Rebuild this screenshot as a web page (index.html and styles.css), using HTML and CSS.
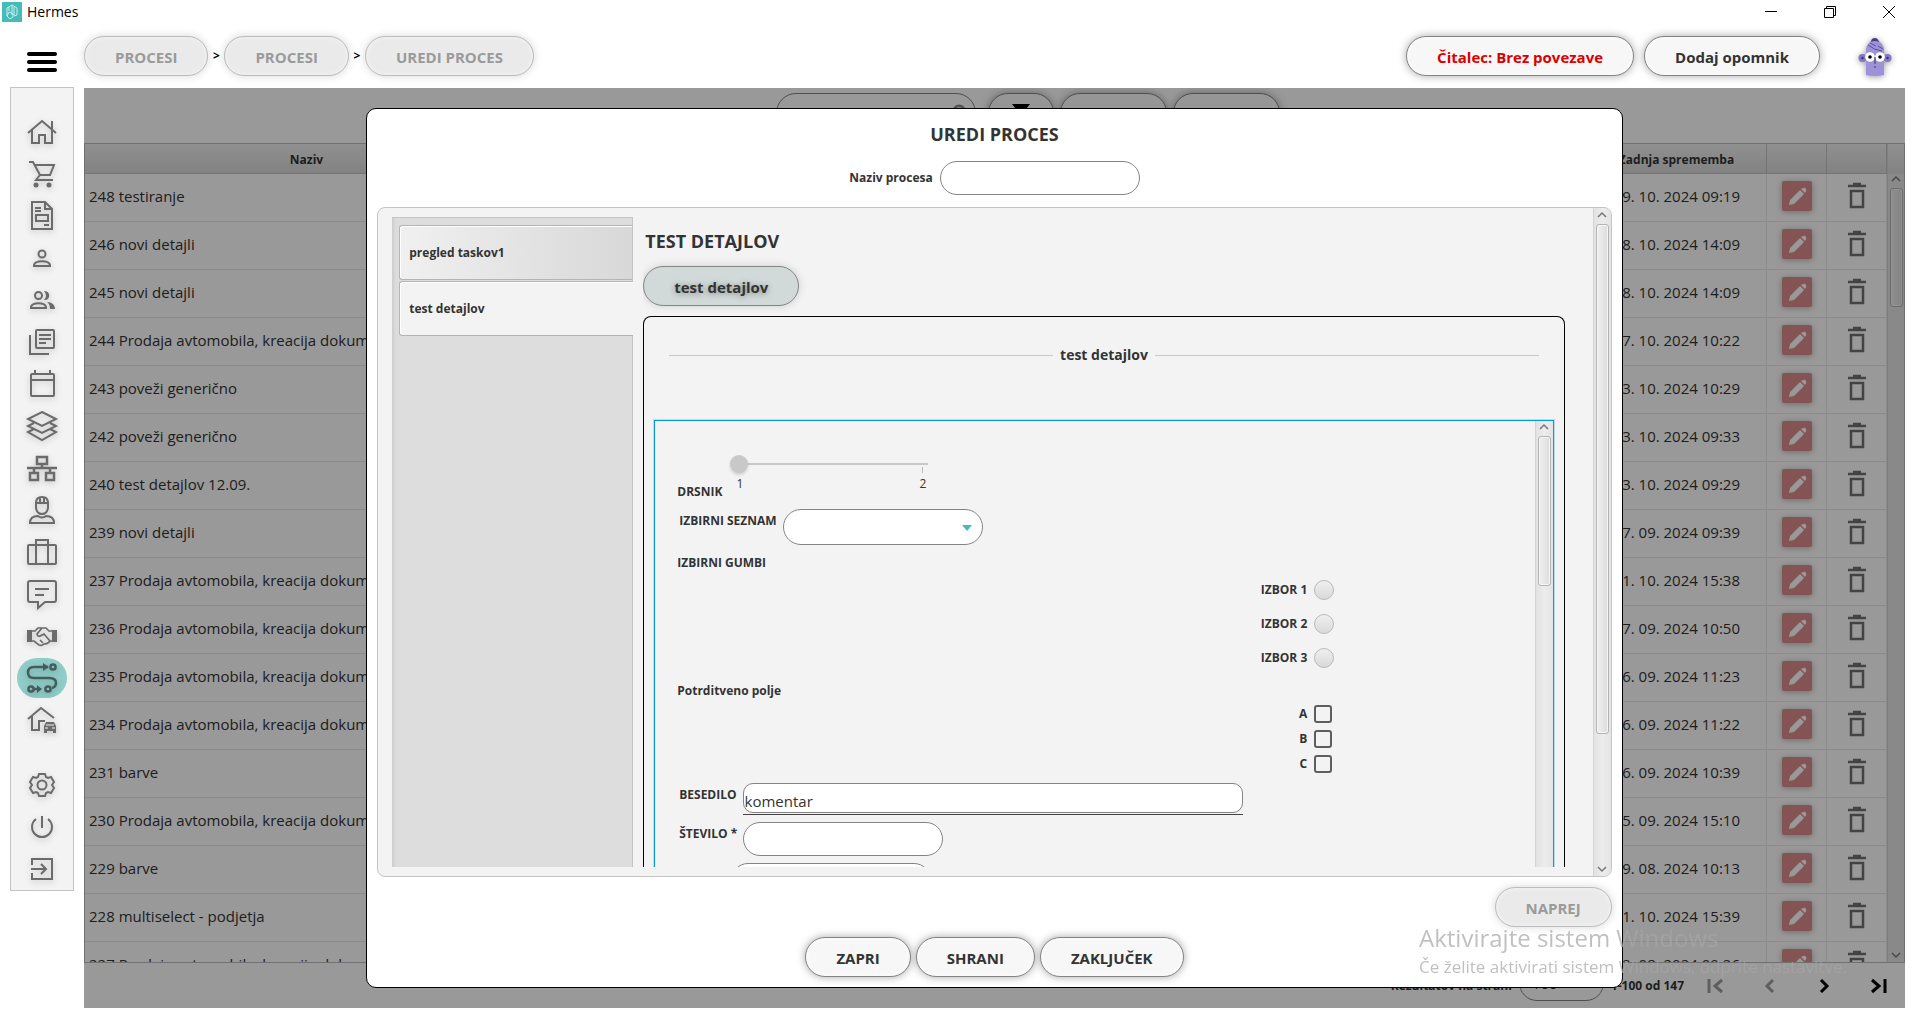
FILE: index.html
```html
<!DOCTYPE html>
<html lang="sl">
<head>
<meta charset="utf-8">
<title>Hermes</title>
<link rel="stylesheet" href="styles.css">
</head>
<body>
<div class="titlebar">
  <svg class="app-logo" viewBox="0 0 20 20"><rect width="20" height="20" fill="#46bcb8"/><path d="M10 3v10M5 6l5-3 5 3v7l-3 1M5 6v8l3 3 3-2v-3l-4-2-2 4M7 5v4M12 5v8" fill="none" stroke="#c9f0ee" stroke-width="1"/></svg>
  <span class="app-name">Hermes</span>
  <div class="window-controls">
    <button aria-label="Minimiraj"><svg viewBox="0 0 14 14"><path d="M1 6.500h12"/></svg></button>
    <button aria-label="Obnovi"><svg viewBox="0 0 14 14"><path d="M1.500 3.500h9v9h-9zM3.500 3.500v-2h9v9h-2"/></svg></button>
    <button aria-label="Zapri okno"><svg viewBox="0 0 14 14"><path d="M1 1l12 12M13 1L1 13"/></svg></button>
  </div>
</div>

<header class="topbar">
  <button class="menu-toggle" aria-label="Meni"><span></span><span></span><span></span></button>
  <nav class="crumbs">
    <button class="pill pill-muted" disabled>PROCESI</button>
    <span>&gt;</span>
    <button class="pill pill-muted" disabled>PROCESI</button>
    <span>&gt;</span>
    <button class="pill pill-muted" disabled>UREDI PROCES</button>
  </nav>
  <div class="top-actions">
    <button class="pill pill-alert">Čitalec: Brez povezave</button>
    <button class="pill">Dodaj opomnik</button>
    <svg class="avatar" viewBox="0 0 34 40">
      <path d="M8 38V12Q9 5 17 3q8 2 9 9v26q-9 2-18 0z" fill="#9d92d8"/>
      <path d="M13 5q0-4 4-4 3 0 4 4-4-2-8 0z" fill="#4a3f85"/>
      <path d="M10 8q6 5 14 6M12 6l6 3M20 9l5 3" fill="none" stroke="#5a4e99"/>
      <circle cx="4.500" cy="21" r="4" fill="#8478c4"/><circle cx="29.500" cy="21" r="4" fill="#8478c4"/>
      <circle cx="4.500" cy="21" r="1.200" fill="#3c3468"/><circle cx="29.500" cy="21" r="1.200" fill="#3c3468"/>
      <circle cx="12" cy="20" r="4.800" fill="#fff"/><circle cx="22" cy="20" r="4.800" fill="#fff"/>
      <circle cx="12" cy="20" r="1.800"/><circle cx="22" cy="20" r="1.800"/>
      <path d="M17 20v7M16 30h2" fill="none" stroke="#3c3468"/>
    </svg>
  </div>
</header>

<div class="workspace">
  <nav class="sidebar">
    <a href="#" aria-label="Domov"><svg viewBox="0 0 30 30"><path d="M1 16L15 4l14 12M5 13v13h7v-8h6v8h7V13M25 12V4"/></svg></a>
    <a href="#" aria-label="Prodaja"><svg viewBox="0 0 30 30"><path d="M2 3h4l7 13h10l4-10H8M13 16l-4 5h17"/><circle cx="9" cy="26" r="2.500" class="solid"/><circle cx="22" cy="26" r="2.500" class="solid"/></svg></a>
    <a href="#" aria-label="Dokument"><svg viewBox="0 0 30 30"><path d="M5 1h13l7 7v20H5z"/><path d="M18 1v7h7M8 7h6M8 10h6M17 24h5M9 14h12v6H9z"/></svg></a>
    <a href="#" aria-label="Oseba"><svg viewBox="0 0 30 30"><circle cx="15" cy="11" r="3.500"/><path d="M7 23v-1c1-5 15-5 16 0v1z"/></svg></a>
    <a href="#" aria-label="Osebe"><svg viewBox="0 0 30 30"><circle cx="11.500" cy="10.500" r="3.500"/><path d="M4 23v-1c1-5 14-5 15 0v1z"/><path class="solid" d="M17 6c7-1 7 10 0 9q4-4.500 0-9zM20 17c5 0 8 3 8 7h-5q0-5-3-7z"/></svg></a>
    <a href="#" aria-label="Arhiv"><svg viewBox="0 0 30 30"><rect x="9" y="3" width="18" height="18" rx="1"/><path d="M3 8v19h19M12 8h12M12 12h12M12 16h7"/></svg></a>
    <a href="#" aria-label="Koledar"><svg viewBox="0 0 30 30"><rect x="4" y="5" width="23" height="22" rx="1"/><path d="M4 11h23M8 1v4M23 1v4"/></svg></a>
    <a href="#" aria-label="Plasti"><svg viewBox="0 0 30 30"><path d="M15 1l14 7-14 7L1 8zM7 12l-6 3 14 7 14-7-6-3M7 18l-6 3 14 8 14-8-6-3"/></svg></a>
    <a href="#" aria-label="Organizacija"><svg viewBox="0 0 30 30"><path stroke-width="2.500" d="M10 4h10v7H10zM3 20h8v7H3zM19 20h8v7h-8zM0 15h30M15 11v4M7 15v5M23 15v5"/></svg></a>
    <a href="#" aria-label="Delavec"><svg viewBox="0 0 30 30"><path d="M8 8h14M9 8q0-6 6-6t6 6v5q-1 6-6 6t-6-6zM13 2v6M17 2v6M3 28q0-7 8-7 4 3 8 0 8 0 8 7z"/></svg></a>
    <a href="#" aria-label="Kovček"><svg viewBox="0 0 30 30"><rect x="1" y="8" width="28" height="19" rx="1"/><path d="M9 27V3h12v24"/></svg></a>
    <a href="#" aria-label="Sporočila"><svg viewBox="0 0 30 30"><path d="M3 2h24q2 0 2 2v17q0 2-2 2h-9l-7 6v-6H3q-2 0-2-2V4q0-2 2-2zM8 10h14M8 16h9"/></svg></a>
    <a href="#" aria-label="Pogodbe"><svg viewBox="0 0 30 30"><path class="solid" d="M0 9h5v12H0zM25 9h5v12h-5z"/><path stroke-width="1.700" d="M5 10h3l3-3h4M5 20h2l5 4q3 1 5-1 4 0 6-3h2M25 10h-3l-3-3h-4l-5 6q1 4 5 1l2-1 6 7M13 19l3 3"/></svg></a>
    <a href="#" aria-label="Procesi" class="active"><svg viewBox="0 0 30 30"><g stroke-width="2.500"><path d="M21 4H7q-6 0-6 5.500T7 15h15q7 0 7 5 0 4-4 5M7 26h4"/><circle cx="26" cy="4" r="2.600"/><circle cx="4" cy="26" r="2.600"/><circle cx="21" cy="26" r="2.600"/></g><path class="solid" d="M16 0l6 4-6 4zM10 22l5 4-5 4z"/></svg></a>
    <a href="#" aria-label="Nepremičnine"><svg viewBox="0 0 30 30"><path d="M1 14L14 3l13 10M5 11v14h7M12 26v-10h6"/><path class="solid" d="M19 17h8l2 4v7h-3v-2h-6v2h-3v-7z"/><path stroke="#f3f3f3" stroke-width="1" d="M19 20h8M18 23h3M25 23h3"/></svg></a>
    <a href="#" aria-label="Nastavitve" class="split"><svg viewBox="0 0 30 30"><path d="M12 4h6l1 3 2 1 3-1 3 5-2 3 2 3-3 5-3-1-2 1-1 3h-6l-1-3-2-1-3 1-3-5 2-3-2-3 3-5 3 1 2-1z"/><circle cx="15" cy="15" r="4.500"/></svg></a>
    <a href="#" aria-label="Izklop"><svg viewBox="0 0 30 30"><path d="M15 4v12M9 7a10 10 0 1 0 12 0"/></svg></a>
    <a href="#" aria-label="Odjava"><svg viewBox="0 0 30 30"><path d="M5 11V5h20v20H5v-6M4 15h14M14 10l5 5-5 5"/></svg></a>
  </nav>

  <main class="main">
    <div class="toolbar">
      <div class="search"><input type="search" aria-label="Iskanje"><svg viewBox="0 0 20 20"><circle cx="8" cy="8" r="6"/><path d="M12 12l6 6"/></svg></div>
      <button class="tool tool-filter" aria-label="Filter"><svg viewBox="0 0 20 20"><path d="M0 0h20l-8 10v8H8v-8z"/></svg></button>
      <button class="tool" aria-label="Dodaj"></button>
      <button class="tool" aria-label="Izvozi"></button>
    </div>

    <div class="grid">
      <table>
        <colgroup><col class="c-name"><col><col class="c-date"><col class="c-act"><col class="c-act"></colgroup>
        <thead><tr><th>Naziv</th><th></th><th>Zadnja sprememba</th><th></th><th></th></tr></thead>
        <tbody id="rows"></tbody>
      </table>
      <div class="scroll scroll-grid"><svg viewBox="0 0 10 8"><path d="M1 6l4-4 4 4"/></svg><i></i><svg viewBox="0 0 10 8"><path d="M1 2l4 4 4-4"/></svg></div>
    </div>

    <div class="pager">
      <label for="page-size">Rezultatov na strani</label>
      <select id="page-size"><option>100</option></select>
      <span>1-100 od 147</span>
      <div class="pager-nav">
        <button disabled aria-label="Prva stran"><svg viewBox="0 0 18 16"><path d="M2 1v14M15 2L8 8l7 6"/></svg></button>
        <button disabled aria-label="Prejšnja stran"><svg viewBox="0 0 18 16"><path d="M12 2L6 8l6 6"/></svg></button>
        <button aria-label="Naslednja stran"><svg viewBox="0 0 18 16"><path d="M6 2l6 6-6 6"/></svg></button>
        <button aria-label="Zadnja stran"><svg viewBox="0 0 18 16"><path d="M16 1v14M3 2l7 6-7 6"/></svg></button>
      </div>
    </div>

    <div class="overlay">
      <section class="modal" role="dialog" aria-labelledby="modal-title">
        <h1 id="modal-title">UREDI PROCES</h1>
        <div class="name-row"><label for="proc-name">Naziv procesa</label><input class="field" id="proc-name" type="text"></div>

        <div class="panel">
          <div class="tabs">
            <button>pregled taskov1</button>
            <button class="selected">test detajlov</button>
          </div>
          <div class="pane">
            <h2>TEST DETAJLOV</h2>
            <button class="pill pill-step">test detajlov</button>
            <div class="box">
              <div class="legend"><span>test detajlov</span></div>
              <div class="form-frame">
                <form class="form">
                  <div class="row-slider">
                    <label for="drsnik">DRSNIK</label>
                    <div class="slider">
                      <input id="drsnik" type="range" min="1" max="2" value="1">
                      <div class="ticks"><span>1</span><span>2</span></div>
                    </div>
                  </div>
                  <div class="row row-list"><label for="seznam">IZBIRNI SEZNAM</label>
                    <div class="select"><select id="seznam"><option></option></select></div></div>
                  <fieldset class="radios">
                    <legend>IZBIRNI GUMBI</legend>
                    <label>IZBOR 1<input type="radio" name="izbor"></label>
                    <label>IZBOR 2<input type="radio" name="izbor"></label>
                    <label>IZBOR 3<input type="radio" name="izbor"></label>
                  </fieldset>
                  <fieldset class="checks">
                    <legend>Potrditveno polje</legend>
                    <label>A<input type="checkbox"></label>
                    <label>B<input type="checkbox"></label>
                    <label>C<input type="checkbox"></label>
                  </fieldset>
                  <div class="row"><label for="besedilo">BESEDILO</label><div class="underlined"><input class="text" id="besedilo" type="text" value="komentar"></div></div>
                  <div class="row"><label for="stevilo">ŠTEVILO *</label><input class="field" id="stevilo" type="text"></div>
                  <div class="row row-next"><input class="field" type="text" aria-label="Datum"></div>
                </form>
                <div class="scroll scroll-form"><svg viewBox="0 0 10 8"><path d="M1 6l4-4 4 4"/></svg><i></i></div>
              </div>
            </div>
          </div>
          <div class="scroll scroll-panel"><svg viewBox="0 0 10 8"><path d="M1 6l4-4 4 4"/></svg><i></i><svg viewBox="0 0 10 8"><path d="M1 2l4 4 4-4"/></svg></div>
        </div>

        <div class="next"><button class="pill pill-muted" disabled>NAPREJ</button></div>
        <div class="actions">
          <button class="pill">ZAPRI</button>
          <button class="pill">SHRANI</button>
          <button class="pill">ZAKLJUČEK</button>
        </div>
      </section>
    </div>
  </main>
</div>

<div class="activation">
  <p>Aktivirajte sistem Windows</p>
  <p class="small">Če želite aktivirati sistem Windows, odprite nastavitve.</p>
</div>
<script src="rows.js"></script>
</body>
</html>
```
FILE: rows.js
```js
const rows = [
  ["248 testiranje", "19. 10. 2024 09:19"],
  ["246 novi detajli", "18. 10. 2024 14:09"],
  ["245 novi detajli", "18. 10. 2024 14:09"],
  ["244 Prodaja avtomobila, kreacija dokumentov", "17. 10. 2024 10:22"],
  ["243 poveži generično", "23. 10. 2024 10:29"],
  ["242 poveži generično", "23. 10. 2024 09:33"],
  ["240 test detajlov 12.09.", "23. 10. 2024 09:29"],
  ["239 novi detajli", "17. 09. 2024 09:39"],
  ["237 Prodaja avtomobila, kreacija dokumentov", "11. 10. 2024 15:38"],
  ["236 Prodaja avtomobila, kreacija dokumentov", "17. 09. 2024 10:50"],
  ["235 Prodaja avtomobila, kreacija dokumentov", "16. 09. 2024 11:23"],
  ["234 Prodaja avtomobila, kreacija dokumentov", "16. 09. 2024 11:22"],
  ["231 barve", "16. 09. 2024 10:39"],
  ["230 Prodaja avtomobila, kreacija dokumentov", "05. 09. 2024 15:10"],
  ["229 barve", "29. 08. 2024 10:13"],
  ["228 multiselect - podjetja", "11. 10. 2024 15:39"],
  ["227 Prodaja avtomobila, kreacija dokumentov", "22. 08. 2024 09:26"]
];
const edit = '<button class="edit" aria-label="Uredi"><svg viewBox="0 0 30 30"><path d="M7 24l1-5L18 9l4 4-10 10zM19 8l2-1q2-1 3 1t-1 4z"/></svg></button>';
const trash = '<button class="trash" aria-label="Izbriši"><svg viewBox="0 0 20 28"><path d="M1 4h18M6 2h8M4 9h12v16H4z"/></svg></button>';
document.getElementById("rows").innerHTML = rows.map(([name, date]) =>
  `<tr><td>${name}</td><td></td><td class="date">${date}</td><td class="act">${edit}</td><td class="act">${trash}</td></tr>`).join("");
```
FILE: styles.css
```css
* { box-sizing: border-box; }

body {
  margin: 0;
  height: 100vh;
  display: flex;
  flex-direction: column;
  padding-bottom: 14px;
  overflow: hidden;
  background: #fff;
  color: #333;
  font: 15px/22px "Open Sans", "Noto Sans", sans-serif;
}

button, input, select { font: inherit; color: inherit; margin: 0; }
button { padding: 0; border: 0; background: none; }
h1, h2, p { margin: 0; }
svg { display: block; }

/* title bar */
.titlebar { display: flex; align-items: center; height: 24px; padding-left: 2px; gap: 5px; }
.app-logo { width: 20px; height: 20px; }
.app-name { color: #000; font-size: 14px; }
.window-controls { display: flex; margin-left: auto; }
.window-controls button { width: 59px; display: flex; justify-content: center; }
.window-controls svg { width: 14px; height: 14px; fill: none; stroke: #000; }

/* top bar */
.topbar { display: flex; align-items: flex-start; height: 64px; padding: 12px 13px 0 0; }
.menu-toggle { width: 84px; padding: 16px 27px 0; display: flex; flex-direction: column; gap: 4px; }
.menu-toggle span { height: 4px; border-radius: 2px; background: #000; }
.crumbs { display: flex; align-items: center; font-size: 12px; font-weight: 700; color: #000; }
.crumbs span { width: 16px; text-align: center; }
.top-actions { display: flex; margin-left: auto; gap: 10px; }
.avatar { width: 34px; height: 40px; margin: 1px 13px 0 28px; filter: drop-shadow(0 1px 3px rgba(0,0,0,.4)); }

.pill {
  height: 40px;
  padding: 2px 30px 0;
  border: 1px solid #848484;
  border-radius: 20px;
  background: #f7f7f7;
  box-shadow: 0 0 8px rgba(0,0,0,.35), inset 0 0 4px #fff;
  font-size: 15px;
  font-weight: 700;
  white-space: nowrap;
}
.pill-muted { color: #9a9a9a; border-color: #bdbdbd; background: #eaeaea; box-shadow: 0 0 8px rgba(0,0,0,.16), inset 0 0 4px #f6f6f6; }
.pill-alert { color: #dc0000; }
.pill-step { align-self: flex-start; background: #d1dad9; box-shadow: 0 0 8px rgba(0,0,0,.15); text-shadow: 0 1px 6px rgba(0,0,0,.4); }

/* sidebar */
.workspace { flex: 1; min-height: 0; display: flex; align-items: flex-start; padding: 0 13px 0 10px; }
.sidebar {
  flex: none;
  display: flex;
  flex-direction: column;
  align-items: center;
  width: 64px;
  margin: -1px 10px 0 0;
  padding: 23px 0 0;
  border: 1px solid #c4c4c4;
  background: #f3f3f3;
}
.sidebar a { width: 50px; height: 40px; margin: 1px 0; display: grid; place-items: center; border-radius: 20px; }
.sidebar .split { margin-top: 24px; }
.sidebar svg { width: 30px; height: 30px; fill: none; stroke: #6b6b6b; stroke-width: 2; filter: drop-shadow(0 2px 3px rgba(0,0,0,.2)); overflow: visible; }
.sidebar .solid { fill: #6b6b6b; stroke: none; }
.sidebar .active { background: #8fcdc9; }
.sidebar .active svg { stroke: #465c5b; }
.sidebar .active .solid { fill: #465c5b; }

/* main area */
.main { position: relative; flex: 1; min-width: 0; height: 100%; display: flex; flex-direction: column; overflow: hidden; }
.toolbar { display: flex; justify-content: center; gap: 6px; height: 55px; padding: 5px 0 0 66px; flex: none; }
.search { display: flex; align-items: center; width: 200px; height: 40px; margin-right: 6px; padding: 0 5px 0 10px; border: 1px solid #848484; border-radius: 20px; }
.search input { flex: 1; min-width: 0; border: 0; background: none; outline: 0; }
.search svg { width: 18px; height: 20px; fill: none; stroke: #8a8a8a; stroke-width: 3; }
.tool { width: 107px; height: 40px; border: 1px solid #848484; border-radius: 20px; box-shadow: 0 0 8px rgba(0,0,0,.35); background: #fbfbfb; }
.tool-filter { width: 66px; display: grid; place-items: center; }
.tool-filter svg { width: 20px; height: 18px; }

.grid { position: relative; flex: 1; min-height: 0; display: flex; overflow: hidden; border: 1px solid #bdbdbd; }
.grid table { flex: 1; align-self: flex-start; table-layout: fixed; border-collapse: separate; border-spacing: 0; width: 100%; }
.c-name { width: 444px; }
.c-date { width: 180px; }
.c-act { width: 60px; }
.grid th { height: 30px; padding: 2px 0 0; font-size: 12px; line-height: 16px; font-weight: 700; background: linear-gradient(#f0f0f0, #d9d9d9); border: 1px solid #c2c2c2; border-width: 0 1px 1px 0; }
.grid td { height: 48px; padding: 0 0 4px 4px; border: 1px solid #e9e9e9; border-width: 0 1px 1px 0; white-space: nowrap; overflow: hidden; }
.grid .date { padding-right: 26px; text-align: right; }
.grid .act { padding: 0 0 3px; }
.edit { width: 30px; height: 30px; margin: 0 auto; display: block; border-radius: 2px; background: #dd8c8c; box-shadow: 0 1px 6px rgba(0,0,0,.3); }
.edit svg { fill: #fff; }
.trash { display: block; margin: 0 auto; }
.trash svg { width: 20px; height: 28px; fill: none; stroke: #707070; stroke-width: 2.5; }

/* scroll bars */
.scroll { flex: none; width: 18px; display: flex; flex-direction: column; align-items: center; gap: 5px; background: linear-gradient(90deg, #e2e2e2, #ececec 50%, #e4e4e4); border-left: 1px solid #d4d4d4; }
.scroll svg { width: 10px; height: 8px; flex: none; fill: none; stroke: #777; stroke-width: 1.500; }
.scroll svg:last-child { margin-top: auto; }
.scroll i { width: 13px; border: 1px solid #b4b4b4; border-radius: 3px; background: linear-gradient(90deg, #f0f0f0, #dcdcdc); box-shadow: inset 0 0 0 1px #f6f6f6; }
.scroll-grid { width: 17px; padding: 31px 0 3px; background: linear-gradient(#f0f0f0, #d9d9d9 30px, #e4e4e4 30px); }
.scroll-grid i { height: 119px; }
.scroll-panel { padding: 3px 0; }
.scroll-panel i { height: 77%; }
.scroll-form { padding-top: 2px; }
.scroll-form i { height: 150px; }

.pager { flex: none; height: 45px; display: flex; align-items: center; justify-content: flex-end; font-size: 12px; font-weight: 700; }
.pager select { width: 85px; height: 36px; margin: 0 7px 6px; padding-left: 12px; appearance: none; border: 1px solid #848484; border-radius: 18px; font-size: 15px; font-weight: 400; background: linear-gradient(#46bcb8, #46bcb8) 68px 17px/6px 4px no-repeat #fff; }
.pager-nav { display: flex; }
.pager button { width: 54px; display: grid; place-items: center; }
.pager svg { width: 18px; height: 16px; fill: none; stroke: #000; stroke-width: 3; }
.pager button:disabled svg { stroke: #9e9e9e; }
.pager span { margin-right: 5px; }

/* dialog */
.overlay { position: absolute; inset: 0; display: flex; justify-content: center; padding: 20px 0; background: rgba(0,0,0,.4); }
.modal { width: 69%; display: flex; flex-direction: column; padding: 12px 10px 10px; border: 1px solid #000; border-radius: 10px; background: #fff; }
.modal h1, .modal h2 { font-size: 18px; line-height: 26px; font-weight: 700; }
.modal h1 { text-align: center; }
.modal label, .modal legend { font-size: 12px; line-height: 18px; font-weight: 700; }
.name-row { display: flex; justify-content: center; align-items: center; gap: 7px; margin: 14px 0 12px; }
.field { width: 200px; height: 34px; padding: 0 12px; border: 1px solid #848484; border-radius: 17px; background: #fff; outline: 0; }

.panel { flex: 1; min-height: 0; display: flex; overflow: hidden; border: 1px solid #c4c4c4; border-radius: 8px; background: #f3f3f3; }
.tabs { flex: none; width: 241px; margin: 9px 0 9px 14px; padding: 7px 0 0 7px; display: flex; flex-direction: column; gap: 1px; background: #ddd; border: 1px solid #c4c4c4; border-width: 1px 1px 0 0; box-shadow: inset 4px 0 3px -2px #ccc; }
.tabs button { height: 55px; padding-left: 9px; text-align: left; font-size: 12px; font-weight: 700; border: 1px solid #b4b4b4; border-right: 0; border-radius: 3px 0 0 3px; background: linear-gradient(90deg, #f0f0f0, #d8d8d8); box-shadow: inset 1px 1px #fff; }
.tabs .selected { background: #f3f3f3; margin-right: -1px; }

.pane { flex: 1; min-width: 0; display: flex; flex-direction: column; margin: 9px 28px 9px 10px; overflow: hidden; }
.pane h2 { margin: 11px 0 12px 2px; }
.pane .pill { flex: none; }
.box { flex: 1; min-height: 0; display: flex; flex-direction: column; margin-top: 10px; padding: 26px 10px 0; border: 1px solid #000; border-bottom: 0; border-radius: 8px 8px 0 0; }
.legend { display: flex; align-items: center; gap: 7px; margin: 0 15px 53px; font-size: 14px; line-height: 24px; font-weight: 700; }
.legend::before, .legend::after { content: ""; flex: 1; height: 1px; background: #c8c8c8; }
.form-frame { flex: 1; min-height: 0; display: flex; border: 1px solid #039ed3; border-bottom: 0; outline: 1px solid #b5dfed; overflow: hidden; margin-bottom: -1px; }
.form { flex: 1; min-width: 0; padding: 34px 0 0 22px; overflow: hidden; }
.row-slider { display: flex; align-items: flex-end; gap: 8px; }
.slider { width: 202px; padding-bottom: 9px; }
.slider input { display: block; width: 100%; height: 18px; appearance: none; background: linear-gradient(#c8c8c8, #c8c8c8) 8px 8px/190px 2px no-repeat; }
.slider input::-webkit-slider-thumb { appearance: none; width: 18px; height: 18px; border-radius: 9px; background: #c8c8c8; box-shadow: 0 2px 3px rgba(0,0,0,.15); }
.ticks { position: relative; display: flex; justify-content: space-between; padding: 3px 6px 0; font-size: 12px; line-height: 16px; }
.ticks::after { content: ""; position: absolute; right: 9px; top: -6px; height: 6px; border-left: 1px solid #bbb; }
.row { display: flex; align-items: flex-start; gap: 6px; padding-left: 2px; margin-bottom: 7px; }
.row label { padding-top: 3px; }
.row-list { margin-top: 8px; margin-bottom: 8px; }
.select { position: relative; }
.select select { width: 200px; height: 36px; appearance: none; padding: 0 24px 0 12px; border: 1px solid #848484; border-radius: 18px; background: #fff; outline: 0; }
.select::after { content: ""; position: absolute; right: 11px; top: 16px; border: 5px solid transparent; border-top: 6px solid #46bcb8; border-bottom: 0; }
fieldset { display: flex; flex-direction: column; align-items: flex-end; width: 657px; max-width: 100%; margin: 0; padding: 0; border: 0; }
fieldset legend { padding: 1px 0; }
fieldset label { display: flex; align-items: center; gap: 7px; }
.radios label { height: 34px; }
.radios input { appearance: none; width: 20px; height: 20px; border: 1px solid #bababa; border-radius: 10px; background: linear-gradient(#efefef, #d9d9d9); }
.checks { margin: 6px 0 7px; padding-right: 2px; }
.checks label { height: 25px; }
.checks input { appearance: none; width: 18px; height: 18px; border: 2px solid #5e5e5e; border-radius: 3px; }
.underlined { border-bottom: 1px solid #444; padding-bottom: 1px; }
.text { display: block; width: 500px; height: 30px; padding: 5px 1px 0; border: 1px solid #848484; border-radius: 10px; background: #fff; outline: 0; }
.row-next { padding-left: 54px; }

.next { display: flex; justify-content: flex-end; padding-top: 10px; }
.actions { display: flex; justify-content: center; gap: 5px; padding-top: 10px; }

/* system activation notice */
.activation { position: fixed; right: 74px; bottom: 42px; width: 425px; color: rgba(165,165,165,.7); font-size: 24px; line-height: 32px; white-space: nowrap; pointer-events: none; }
.activation .small { font-size: 17px; line-height: 26px; }
```
